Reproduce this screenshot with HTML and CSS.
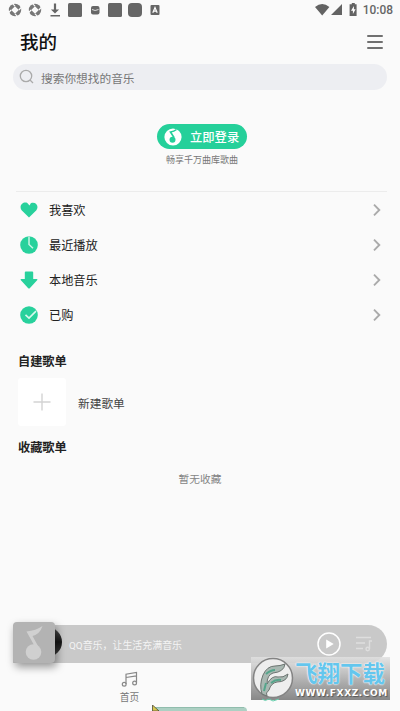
FILE: index.html
```html
<!DOCTYPE html>
<html lang="zh-CN">
<head>
<meta charset="utf-8">
<title>我的</title>
<link rel="stylesheet" href="styles.css">
</head>
<body>
<div class="app">
  <div class="status">
    <svg class="status-left" width="170" height="20" viewBox="0 0 170 20" fill="#666">
      <circle cx="15" cy="10" r="6.200" fill="#777"/><circle cx="35" cy="10" r="6.200" fill="#777"/>
      <path d="M15 6.200 18.800 10 15 13.800 11.200 10zM35 6.200 38.800 10 35 13.800 31.200 10z" fill="#fafafa"/>
      <path d="m15 6.200-3-3M18.800 10l3-3M15 13.800l3 3M11.200 10l-3 3M35 6.200l-3-3M38.800 10l3-3M35 13.800l3 3M31.200 10l-3 3" stroke="#fafafa" stroke-width="1.200"/>
      <path d="M53.900 3.500h2.200v6h3L55 13.500 50.900 9.500h3zM50.500 15h9.500v1.500h-9.500z"/>
      <rect x="68" y="3" width="14" height="14" rx="1.500"/>
      <rect x="91" y="6" width="8.500" height="8.500" rx="2"/>
      <path d="M92 9.500q3 2 6.500 0" fill="none" stroke="#ddd"/>
      <rect x="108" y="3" width="14" height="14" rx="1.500"/>
      <rect x="128" y="3" width="14" height="14" rx="4"/>
      <rect x="150.500" y="5" width="9" height="10" rx="1"/>
      <path d="M152.800 12.700 155 7.500l2.200 5.200M153.500 11.200h3" fill="none" stroke="#fff" stroke-width="1.200"/>
    </svg>
    <div class="status-right">
      <svg width="44" height="20" viewBox="0 0 44 20" fill="#636363">
        <path d="M0 7Q7.200 .800 14.400 7L7.200 15.500zM16 15 27 4v11z"/>
        <path d="M36.800 3h3v1.200h1.800V16h-7V4.200h2.200z"/>
        <path d="m38.900 6-2.900 4.800h1.900V14l2.700-4.800h-1.700z" fill="#fff"/>
      </svg>
      <span>10:08</span>
    </div>
  </div>
  <header class="header">
    <h1>我的</h1>
    <div class="menu"><i></i><i></i><i></i></div>
  </header>
  <div class="search">
    <svg width="16" height="16" viewBox="0 0 16 16" fill="none" stroke="#aaa" stroke-width="1.300"><circle cx="7" cy="7" r="5.700"/><path d="m11 11 3 3"/></svg>
    <span>搜索你想找的音乐</span>
  </div>
  <section class="login">
    <div class="login-button">
      <svg width="18" height="18" viewBox="0 0 18 18"><circle cx="9" cy="9" r="8.600" fill="#fff"/><path d="M12.500 1.500Q10 3.500 6.500 4L10 9.500" fill="none" stroke="#25d09a" stroke-width="1.600"/><circle cx="8.500" cy="11.700" r="3" fill="#25d09a"/></svg>
      <span>立即登录</span>
    </div>
    <p>畅享千万曲库歌曲</p>
  </section>
  <ul class="links">
    <li>
      <svg width="18" height="18" viewBox="0 0 18 18"><path d="M9 16.400 1.600 9.200C-1.500 5 3 .2 7.300 2L9.500 4.600 10.800 2.200C15.500 .2 19.500 5 16.400 9.200z" fill="#28d19c"/></svg>
      <span>我喜欢</span>
      <svg class="chevron" width="8" height="12" viewBox="0 0 8 12"><path d="m1 .700 5.300 5.300L1 11.300"/></svg>
    </li>
    <li>
      <svg width="18" height="18" viewBox="0 0 18 18"><circle cx="9" cy="9" r="8.800" fill="#28d19c"/><path d="M9 .5V8.500l4 3.800" fill="none" stroke="#c8f5e5" stroke-width="1.500"/></svg>
      <span>最近播放</span>
      <svg class="chevron" width="8" height="12" viewBox="0 0 8 12"><path d="m1 .700 5.300 5.300L1 11.300"/></svg>
    </li>
    <li>
      <svg width="18" height="18" viewBox="0 0 18 18"><path d="M5.800 .500h6.400q1 0 1 1V8h3.500q1.500 0 .4 1.200L10 16.900q-1 1-2 0L.9 9.200Q-.2 8 1.300 8h3.500V1.500q0-1 1-1z" fill="#28d19c"/></svg>
      <span>本地音乐</span>
      <svg class="chevron" width="8" height="12" viewBox="0 0 8 12"><path d="m1 .700 5.300 5.300L1 11.300"/></svg>
    </li>
    <li>
      <svg width="18" height="18" viewBox="0 0 18 18"><circle cx="9" cy="9" r="8.800" fill="#28d19c"/><path d="m5.500 8.800 3.500 3.300 7-7" fill="none" stroke="#d8f8ed" stroke-width="1.600"/></svg>
      <span>已购</span>
      <svg class="chevron" width="8" height="12" viewBox="0 0 8 12"><path d="m1 .700 5.300 5.300L1 11.300"/></svg>
    </li>
  </ul>
  <section class="playlists">
    <h2>自建歌单</h2>
    <div class="create">
      <div class="create-tile"><svg width="18" height="18" viewBox="0 0 18 18"><path d="M9 .500v17M.500 9h17" stroke="#d3d3d3" stroke-width="1.400"/></svg></div>
      <span>新建歌单</span>
    </div>
    <h2>收藏歌单</h2>
    <p class="empty">暂无收藏</p>
  </section>
  <div class="player">
    <div class="disc"></div>
    <div class="cover"><svg width="42" height="41" viewBox="0 0 42 41"><path d="M29.500 4Q23 8.500 13.500 9.500L21 23l4 4V24L19.500 14Q27 12 29.500 4z" fill="#d0d0d0"/><circle cx="20.500" cy="30" r="7.800" fill="#d0d0d0"/></svg></div>
    <span class="track">QQ音乐，让生活充满音乐</span>
    <svg class="play" width="24" height="24" viewBox="0 0 24 24"><circle cx="12" cy="12" r="11" fill="none" stroke="#fff" stroke-width="1.500"/><path d="M9.200 7.500v9l7.500-4.500z" fill="#fff"/></svg>
    <svg class="queue" width="18" height="16" viewBox="0 0 18 16" fill="none" stroke="#dedede" stroke-width="1.400"><path d="M1 1.500h15M1 7h9M1 12.500h7M17 5h-2.500v8"/><circle cx="12.700" cy="13" r="1.700"/></svg>
  </div>
  <nav class="nav">
    <div class="tab">
      <svg width="17" height="17" viewBox="0 0 17 17" fill="none" stroke="#888" stroke-width="1.200"><path d="M5 13V3.200L15.500 1.500v10.300M5 6.500l10.500-1.700"/><circle cx="3.200" cy="13.300" r="1.900"/><circle cx="13.600" cy="12" r="1.900"/></svg>
      <span>首页</span>
    </div>
  </nav>
  <svg class="banner" width="98" height="6" viewBox="0 0 98 6"><path d="M4 2h88q4 0 4 4H4z" fill="#acd0c3"/><path d="M5 2.500h88" stroke="#91bdad"/><path d="M1.500 0 8 6H1.500z" fill="#d7c84e" stroke="#4d4a36" stroke-width=".8"/></svg>
  <div class="watermark">
    <svg width="42" height="46" viewBox="0 0 42 46">
      <circle cx="21" cy="21" r="19.500" fill="#eee" stroke="#838383" stroke-width="1.500"/>
      <path d="M10 37Q7 28 11 18 15 9 23 9 28 9 33 7 32 15 21 16 15 18 15 27 20 18 26 20 31 21 36 17 35 25 25 25 19 26 17 33 13 36 15 39z" fill="#a9b8b2" stroke="#6c7471"/>
      <path d="M14 17q5-4 9-4M19 26q5-4 10-3M12 34l2-8" fill="none" stroke="#55a58b" stroke-width="2"/>
      <path d="M10 42q3 3 7 0l4 2 6-2" fill="none" stroke="#67cfad"/>
    </svg>
    <div class="watermark-text"><strong>飞翔下载</strong><span>WWW.FXXZ.COM</span></div>
  </div>
</div>
</body>
</html>
```
FILE: styles.css
```css
* { box-sizing: border-box; }
body { margin: 0; background: #fafafa; font-family: Roboto, "Noto Sans CJK SC", sans-serif; color: #222; }
h1, h2, p, ul { margin: 0; padding: 0; }
svg { display: block; flex: none; }
.app { position: relative; width: 400px; height: 711px; overflow: hidden; display: flex; flex-direction: column; }
.status { height: 20px; flex: none; display: flex; justify-content: space-between; }
.status-right { display: flex; align-items: center; padding-right: 7px; gap: 4px; font-size: 11.900px; font-weight: 500; color: #666; line-height: 20px; }
.header { height: 44px; flex: none; padding: 0 17px 0 20px; display: flex; align-items: center; justify-content: space-between; }
h1 { margin-top: -2px; font-size: 18.500px; line-height: 26px; font-weight: 500; font-family: "Noto Sans CJK SC", sans-serif; color: #111; }
.menu { width: 16px; display: flex; flex-direction: column; gap: 4px; }
.menu i { height: 2px; border-radius: 1px; background: #707070; }
.search { height: 26px; flex: none; margin: 0 13px; padding-left: 6px; border-radius: 13px; background: #edeef2; display: flex; align-items: center; gap: 6px; font-size: 11.700px; color: #777; }
.login { height: 101px; flex: none; padding-top: 34px; display: flex; flex-direction: column; align-items: center; }
.login-button { width: 90px; height: 25px; margin-left: 4px; padding-left: 7px; border-radius: 13px; background: #25d09a; color: #fff; display: flex; align-items: center; gap: 8px; font-size: 12.300px; font-weight: 500; }
.login p { margin: 4px 0 0 4px; font-size: 9px; line-height: 14px; color: #777; }
.links { list-style: none; height: 141px; flex: none; margin: 0 13px 0 16px; border-top: 1px solid #ececec; }
.links li { height: 35px; padding: 0 6px 0 4px; display: flex; align-items: center; font-size: 12.200px; }
.links span { margin-left: 11px; flex: 1; }
.chevron { fill: none; stroke: #aaa; stroke-width: 1.900; }
.playlists { flex: 1; padding: 21px 18px 0; }
h2 { font-size: 12.200px; line-height: 18px; font-weight: 700; color: #222; }
.create { display: flex; align-items: center; gap: 12px; margin: 7px 0 13px; font-size: 11.700px; color: #444; }
.create-tile { width: 48px; height: 48px; border-radius: 3px; background: #fff; display: flex; align-items: center; justify-content: center; }
.empty { margin-top: 14px; text-align: center; font-size: 10.700px; line-height: 18px; color: #858585; }
.player { position: relative; height: 38px; flex: none; margin: 0 13px; padding: 0 14px 0 56px; border-radius: 0 19px 19px 0; background: #c9c9c9; display: flex; align-items: center; font-size: 9.950px; color: #f4f4f4; }
.track { flex: 1; }
.queue { margin-left: 14px; }
.cover { position: absolute; left: 0; top: -3px; width: 42px; height: 41px; border-radius: 4px; background: #b3b3b3; box-shadow: 2px 4px 8px rgba(0, 0, 0, .4); }
.disc { position: absolute; left: 19px; top: 2px; width: 30px; height: 30px; border-radius: 50%; background: linear-gradient(#555, #151515 50%, #444); }
.nav { height: 48px; flex: none; display: flex; }
.tab { width: 259px; padding-top: 8px; display: flex; flex-direction: column; align-items: center; gap: 2px; font-size: 9.700px; line-height: 15px; color: #777; }
.banner { position: absolute; left: 151px; bottom: 0; }
.watermark { position: absolute; left: 251px; top: 657px; width: 139px; height: 43px; padding-left: 1px; display: flex; gap: 1px; background: linear-gradient(rgba(225, 225, 225, .85), #ababab 60%, #888); }
.watermark-text { display: flex; flex-direction: column; white-space: nowrap; }
.watermark strong { height: 31px; font: 700 22.500px/31px "Noto Sans CJK SC", sans-serif; color: #64c6ed; text-shadow: 0 0 1px #fff, 0 0 2px #fff; }
.watermark span { font: 700 9px/10px "DejaVu Sans", sans-serif; color: #fff; letter-spacing: .600px; text-shadow: 1px 1px 1px #555; }
```
